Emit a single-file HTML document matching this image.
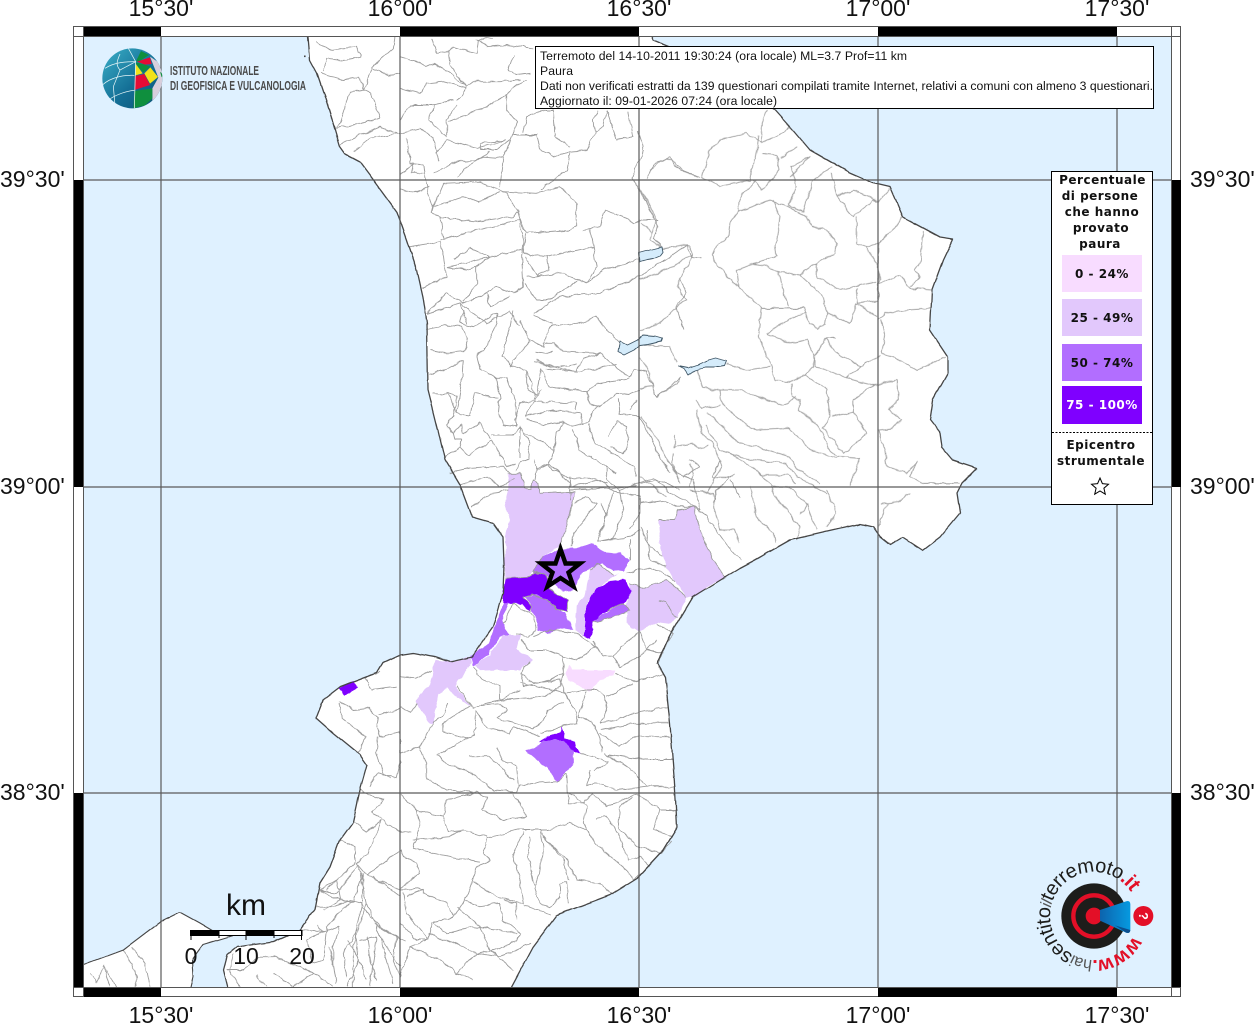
<!DOCTYPE html>
<html lang="it">
<head>
<meta charset="utf-8">
<title>Paura</title>
<style>
html,body{margin:0;padding:0;background:#fff}
body{width:1254px;height:1024px;overflow:hidden;position:relative}
svg{position:absolute;left:0;top:0;display:block}
.b path{fill:none;stroke:#9c9c9c;stroke-width:.9;vector-effect:non-scaling-stroke;stroke-linejoin:round}
.ax{font-family:"Liberation Sans",sans-serif;font-size:23px;fill:#111}
.ig{font-family:"Liberation Sans",sans-serif;font-size:12.5px;fill:#4a4a4a;font-weight:bold}
.inf{font-family:"Liberation Sans",sans-serif;font-size:12.2px;fill:#111}
.lg{font-family:"DejaVu Sans",sans-serif;font-size:12px;font-weight:bold;fill:#111;text-anchor:middle;letter-spacing:.5px}
.sc{font-family:"Liberation Sans",sans-serif;fill:#111;text-anchor:middle}
</style>
</head>
<body>
<svg width="1254" height="1024" viewBox="0 0 1254 1024" xmlns="http://www.w3.org/2000/svg">
<defs>
<linearGradient id="gl" x1="0" y1="0" x2="1" y2="1"><stop offset="0" stop-color="#3bb0c8"/><stop offset=".55" stop-color="#146f96"/><stop offset="1" stop-color="#0b4f72"/></linearGradient>
<linearGradient id="mg" x1="0" y1="0" x2="1" y2="0"><stop offset="0" stop-color="#0d63ad"/><stop offset="1" stop-color="#069ae0"/></linearGradient>
<clipPath id="mapc"><rect x="83" y="36" width="1088" height="951"/></clipPath>
<clipPath id="gc"><circle cx="112" cy="115" r="90"/></clipPath>
<filter id="wob" filterUnits="userSpaceOnUse" x="60" y="20" width="1130" height="990" color-interpolation-filters="sRGB">
<feTurbulence type="fractalNoise" baseFrequency=".11" numOctaves="2" seed="7" result="n"/>
<feDisplacementMap in="SourceGraphic" in2="n" scale="4.5" xChannelSelector="R" yChannelSelector="G" result="d"/>
<feGaussianBlur in="d" stdDeviation=".35"/>
</filter>
<filter id="wobs" filterUnits="userSpaceOnUse" x="60" y="20" width="1130" height="990" color-interpolation-filters="sRGB">
<feTurbulence type="fractalNoise" baseFrequency=".05" numOctaves="2" seed="3" result="n"/>
<feDisplacementMap in="SourceGraphic" in2="n" scale="3" xChannelSelector="R" yChannelSelector="G" result="d"/>
<feGaussianBlur in="d" stdDeviation=".3"/>
</filter>
</defs>

<rect x="83" y="36" width="1088" height="951" fill="#dff1ff"/>

<g clip-path="url(#mapc)">
<!-- land -->
<g filter="url(#wobs)">
<path fill="#fff" d="M306 30L308 37L310 60L317 73L325 97L333 123L340 147L345 154L360 162L375 182L397 212L407 240L417 270L423 297L427 323L428 390L438 430L445 460L460 485L472 517L493 523L503 537L504 565L503 593L493 627L472 657L450 662L435 657L413 653L400 655L383 663L377 673L340 687L323 700L316 718L333 733L360 755L367 765L360 790L353 822L340 840L330 867L320 883L315 910L300 930L273 942L237 947L227 955L223 970L228 990L510 990L533 947L557 915L610 895L637 878L663 850L677 827L675 790L670 723L665 677L657 663L668 640L673 630L693 597L740 568L755 560L790 540L860 524L873 527L880 537L890 545L903 537L923 550L940 537L960 513L957 493L962 483L977 468L953 460L942 447L940 433L930 420L933 400L948 373L948 357L930 330L932 290L943 260L953 239L940 237L903 217L890 187L873 183L850 173L810 150L793 130L775 110L735 70L690 55L653 40L650 30Z"/>
<path fill="#fff" d="M80 966L123 950L160 922L180 912L200 923L217 933L233 936L203 945L192 960L193 977L190 990L80 990Z"/>
</g>

<g filter="url(#wob)">
<!-- coloured zones -->
<g transform="translate(400 460) scale(.33333)">
<path fill="#e2c8fc" d="M325 40L360 40L375 85L395 85L400 60L415 70L420 100L525 95L510 160L480 260L430 290L400 330L385 350L316 355L315 230L330 180L315 130L325 85Z"/>
<path fill="#e2c8fc" d="M775 180L825 180L835 150L880 140L900 210L940 300L975 350L880 410L860 410L825 365L800 320L785 290Z"/>
<path fill="#e2c8fc" d="M690 370L730 385L800 360L860 410L835 470L810 490L775 485L715 515L680 490L680 435Z"/>
<path fill="#e2c8fc" d="M595 310L640 345L660 340L610 370L565 420L555 480L550 530L525 510L530 440L560 390L570 330Z"/>
<path fill="#b26eff" d="M430 290L480 268L540 262L580 250L610 275L660 280L688 300L670 335L640 330L605 310L570 325L545 340L525 390L490 395L465 370L440 345L405 345L395 335Z"/>
<path fill="#7f00ff" d="M315 355L385 350L410 335L440 345L445 385L505 420L505 455L470 450L440 420L395 405L370 410L395 440L390 460L365 430L310 430L305 425Z"/>
<path fill="#b26eff" d="M375 410L410 405L445 420L470 450L495 460L520 510L490 505L440 520L415 510L410 475L395 460L390 430Z"/>
<path fill="#7f00ff" d="M625 365L675 360L695 395L675 430L625 450L590 475L575 490L580 510L570 535L550 525L555 480L555 440L585 390Z"/>
<path fill="#b26eff" d="M675 430L688 450L650 465L600 485L575 485L590 475L630 450Z"/>
<path fill="#b26eff" d="M325 430L305 480L330 525L300 530L265 585L220 618L212 590L265 550L280 510L300 460L310 430Z"/>
<path fill="#e2c8fc" d="M310 525L330 525L360 525L350 565L400 600L360 630L300 630L240 632L225 615L270 585Z"/>
<path fill="#e2c8fc" d="M105 598L150 605L210 590L215 610L165 680L210 735L190 725L140 685L115 700L100 790L90 790L45 725L90 670Z"/>
<path fill="#f8dcff" d="M495 640L505 615L515 630L570 630L610 630L645 630L640 645L600 660L570 695L530 670L505 660Z"/>
<path fill="#7f00ff" d="M418 845L440 828L480 815L483 798L495 835L520 845L540 880L515 870L490 840Z"/>
<path fill="#b26eff" d="M378 875L420 855L430 840L490 840L520 870L520 915L490 945L470 965L445 930Z"/>
</g>
<path fill="#7f00ff" d="M338 687L353 681L358 688L345 695Z"/>

<!-- borders: north -->
<g class="b" transform="translate(300 30) scale(.33333)">
<path d="M50 35L90 60L170 50L185 80L130 90L80 85L70 125"/>
<path d="M60 130L130 150L180 140L190 180L150 185L120 280L110 295"/>
<path d="M285 20L280 55L240 90L215 115L190 180"/>
<path d="M215 115L270 135L300 130"/>
<path d="M110 295L220 270L240 265L215 190L185 180"/>
<path d="M120 345L170 320L240 290L290 310"/>
<path d="M160 365L210 325L300 310"/>
<path d="M300 80L350 95L375 110L405 100L450 130L500 170L520 155L600 155L660 150"/>
<path d="M395 25L410 70L445 65L460 50L530 70L535 30L580 25"/>
<path d="M530 25L560 50L620 45L700 55"/>
<path d="M445 65L450 105L480 145L500 170"/>
<path d="M640 75L625 120L650 135L690 130"/>
<path d="M300 175L360 190L380 160L430 155L500 175L470 210"/>
<path d="M300 270L330 225L395 225L460 210"/>
<path d="M405 225L385 270L440 320L440 270L470 225"/>
<path d="M445 275L560 230L620 195L650 165L680 150"/>
<path d="M620 195L620 240L650 275L640 310L610 385L600 470"/>
<path d="M300 310L360 295L400 320L410 370L420 395"/>
<path d="M320 320L330 400L370 405"/>
<path d="M405 370L440 330L535 355L570 345L615 330L540 340L545 360L590 360L630 330"/>
<path d="M370 405L380 470L400 530L395 550L420 560L520 575L640 560L655 545L620 490L600 480L540 455L430 460L400 530"/>
<path d="M300 435L340 400L335 430L370 430"/>
<path d="M400 530L490 500L540 515L600 485"/>
<path d="M470 445L500 410L550 380L610 385"/>
<path d="M400 430L470 395L530 390L570 365"/>
<path d="M610 485L710 490L780 470L830 520L830 590L810 600L680 610L665 580L655 545"/>
<path d="M640 315L710 315L720 355L760 380L810 365L800 420L720 480"/>
<path d="M810 365L860 360L885 310L880 270L895 240"/>
<path d="M670 310L680 260L740 240L760 240L765 320L810 350"/>
<path d="M885 310L910 290L920 240L950 330L1000 320L985 245"/>
<path d="M1015 300L1030 360L995 440L1020 480L1050 540L1075 590L1060 625L1085 650"/>
<path d="M1040 445L1060 405L1105 380L1140 420L1200 440"/>
<path d="M915 540L980 565L1000 580L1030 570L1075 570"/>
<path d="M915 540L900 590L850 600"/>
<path d="M300 475L340 490L385 470"/>
<path d="M330 650L420 635L430 680L440 740L365 775"/>
<path d="M420 630L520 605L660 570"/>
<path d="M420 560L430 625"/>
<path d="M660 570L670 640L665 680L670 770L640 790L590 770L540 800L490 820L440 790L380 850"/>
<path d="M445 710L570 680L665 660"/>
<path d="M445 710L500 720L530 710L570 680L510 655L460 690"/>
<path d="M530 710L530 760L490 815"/>
<path d="M675 610L670 670L740 680L880 650L870 600"/>
<path d="M880 650L890 710L860 760L790 730L680 740"/>
<path d="M740 680L745 720L710 735L675 680"/>
<path d="M860 760L910 720L1015 690"/>
<path d="M675 760L710 810L750 810L830 750"/>
<path d="M700 850L780 800L900 790L1020 740L1160 645L1175 680L1200 685"/>
<path d="M1140 750L1160 790L1130 830L1150 900"/>
<path d="M480 820L500 880"/>
<path d="M560 790L570 830L630 800"/>
<path d="M380 850L480 820L560 880L630 840L660 890"/>
</g>

<!-- borders: north-east -->
<g class="b" transform="translate(640 100) scale(.33333)">
<path d="M380 30L365 70L365 130L410 110L450 80"/>
<path d="M365 130L320 100L240 120L210 150L185 230L240 260L330 240L350 150L355 105"/>
<path d="M365 160L410 165L420 210L395 240L365 270L340 240"/>
<path d="M420 175L470 140"/>
<path d="M450 230L510 170L455 200L470 260L445 315L490 335L520 240L575 200"/>
<path d="M30 210L75 175L105 185L130 215L180 230"/>
<path d="M350 240L300 290L295 335L390 300L445 320L500 350L520 380L560 390L590 430L585 460L530 490L530 530L600 570L710 545"/>
<path d="M575 220L590 290L640 350L700 300L715 305L640 270L590 290"/>
<path d="M650 350L650 430L680 440L715 430L770 380L785 350"/>
<path d="M295 335L270 370L265 410L235 430L220 465L225 490L265 530L295 565L350 610L365 625L490 625L510 670L530 685L555 675L560 640L610 660L630 670L650 610L710 650"/>
<path d="M400 300L420 350L405 440L410 470L340 490L370 495L420 515L480 525L530 490"/>
<path d="M290 510L295 565M290 510L340 490"/>
<path d="M415 515L445 620M480 525L550 590L560 640"/>
<path d="M650 565L655 610L715 600L715 430"/>
<path d="M680 440L715 500"/>
<path d="M715 500L720 550L780 525L800 550L810 565L875 570"/>
<path d="M850 395L840 490L825 510L840 530L810 560"/>
<path d="M715 660L735 640L800 630L875 625"/>
<path d="M725 660L735 700L725 760L780 780L830 810L920 770"/>
<path d="M365 625L360 680L355 710L385 775L405 840L450 845L495 825L520 800L525 770L555 715L590 715"/>
<path d="M380 700L450 730L500 720L525 770"/>
<path d="M380 700L430 670L460 650L500 640"/>
<path d="M555 715L580 750L660 800L720 765"/>
<path d="M525 770L525 800L550 805L620 835L660 800"/>
<path d="M495 825L560 870L570 950L550 985L610 1060L680 1000L640 935L575 950"/>
<path d="M620 835L700 855L640 900L640 935"/>
<path d="M700 855L770 840L775 900L745 930L785 960L760 985L715 990L735 1050L740 1100L800 1120L830 1085L810 1130L850 1150L955 1150"/>
<path d="M455 850L455 890L480 900L475 930L530 970L570 1050L590 1070L660 1075L630 1160"/>
<path d="M240 870L300 870L380 900L430 915L470 890"/>
<path d="M240 870L245 910L310 970L350 990L450 985L510 1050L590 1075"/>
<path d="M165 900L185 925L240 915"/>
<path d="M170 930L185 1000L215 1030L240 1080L245 1100L200 1180"/>
<path d="M205 940L260 990L300 1030L350 1040L450 1070L470 1105L540 1150"/>
<path d="M195 975L240 1050L300 1070L350 1080L440 1090L470 1130L560 1180"/>
<path d="M270 1060L350 1110L395 1160L450 1160L500 1215L480 1245"/>
<path d="M350 1110L360 1125L445 1125L470 1150"/>
<path d="M105 1005L105 1045L125 1035L155 1030L175 1045L205 1035"/>
<path d="M100 1060L95 1090L120 1150"/>
<path d="M150 1090L160 1110L150 1160"/>
<path d="M0 950L40 1000L80 1075L115 1135"/>
<path d="M0 1130L40 1160L80 1190"/>
<path d="M0 540L100 500L135 475L160 465L150 440L130 435L70 445"/>
<path d="M160 465L110 555L140 600L100 630L60 670L0 695"/>
<path d="M0 735L90 740L110 790"/>
<path d="M260 790L320 810L390 800"/>
<path d="M170 810L190 865L240 870"/>
<path d="M120 830L110 850L50 890L35 860L0 865"/>
<path d="M0 770L30 820L40 860"/>
<path d="M0 265L30 320L50 360L35 400L30 420L70 445"/>
<path d="M0 370L20 380L35 400"/>
<path d="M750 265L715 305"/>
<path d="M225 1230L240 1290L285 1290L300 1330"/>
<path d="M330 1160L350 1250L400 1300L405 1330"/>
<path d="M390 1160L430 1220L480 1280L470 1320"/>
<path d="M500 1210L530 1290"/>
<path d="M560 1170L590 1240L560 1280"/>
<path d="M150 1170L220 1180L225 1230"/>
<path d="M720 1210L775 1205L810 1180M715 1280L740 1210"/>
</g>

<!-- borders: centre -->
<g class="b" transform="translate(420 310) scale(.33333)">
<path d="M20 60L80 45L125 50L145 85L130 125L80 130L30 120"/>
<path d="M30 190L75 180L130 150L125 210L110 310L85 255L35 250"/>
<path d="M130 0L120 40L160 50L230 10L230 40L195 120L170 135L180 175L230 205L240 265L235 310L250 345L290 350L285 270L260 205L230 205"/>
<path d="M280 0L270 50L245 140L275 165L320 180L345 260L340 270L300 280L285 330"/>
<path d="M300 30L330 95L280 150L275 170"/>
<path d="M330 90L370 110L385 60L395 45L470 40L530 20L550 50L600 95"/>
<path d="M340 15L395 40"/>
<path d="M370 100L400 100L430 125L540 130L580 165L630 200L640 175L680 185L695 220L700 240L710 260L750 230L780 200"/>
<path d="M345 125L380 130L400 125M345 155L470 185L490 145L540 130"/>
<path d="M350 150L390 170L470 165M380 175L480 185L590 165"/>
<path d="M320 180L320 235L350 255L365 175L385 230L415 235L500 245L530 220L630 205"/>
<path d="M365 240L350 260L315 320L350 310L400 300L480 310L490 340L505 335L530 290L540 290L590 250L625 255L660 240"/>
<path d="M345 275L400 275L470 280L465 300"/>
<path d="M500 245L510 280L540 290"/>
<path d="M320 325L340 335L370 345L430 335L450 350L490 340"/>
<path d="M300 350L310 365L330 400L325 445L300 460L285 480"/>
<path d="M315 370L385 405L400 425L410 370L435 335"/>
<path d="M400 425L385 460L350 475L345 510"/>
<path d="M385 460L400 480L450 505L500 500L560 520"/>
<path d="M460 355L480 420L550 465L590 490"/>
<path d="M505 340L525 400L570 425L640 470L650 500"/>
<path d="M565 380L590 335L620 350L625 400L610 430L570 410"/>
<path d="M595 265L600 310L655 320L680 360L720 440L750 490"/>
<path d="M630 300L650 270"/>
<path d="M215 375L280 375L300 350L300 400L300 445"/>
<path d="M215 390L170 420L145 435L120 410L125 390"/>
<path d="M125 390L105 390L100 370L125 345L130 370L180 340L210 385"/>
<path d="M80 250L110 260L100 320L80 345L100 370"/>
<path d="M110 310L150 315L165 250L235 265"/>
<path d="M75 440L120 410"/>
<path d="M215 390L260 470L285 460"/>
<path d="M85 490L150 475L250 470L270 490"/>
<path d="M450 500L450 570"/>
<path d="M560 470L560 510L600 540L650 520"/>
<path d="M650 520L700 505L740 520L780 540"/>
</g>

<!-- borders: around coloured area -->
<g class="b" transform="translate(400 460) scale(.33333)">
<path d="M180 75L260 50L300 80L345 55"/>
<path d="M215 140L270 100L325 90"/>
<path d="M400 0L410 30L450 10L510 70L515 80L600 60L640 95L620 160L600 230"/>
<path d="M510 90L640 85L710 75"/>
<path d="M525 130L555 110L590 130L520 220L515 260"/>
<path d="M600 130L620 165L590 245"/>
<path d="M640 95L720 110L720 160L690 205"/>
<path d="M660 90L670 150L640 235L590 245L690 230L720 210"/>
<path d="M720 130L780 120L830 140L880 140"/>
<path d="M720 200L750 260L785 290"/>
<path d="M690 240L690 300"/>
<path d="M740 210L750 300L800 320"/>
<path d="M680 340L750 320L800 345L825 365"/>
<path d="M880 140L920 170L985 260L1020 300"/>
<path d="M900 150L880 60L830 40L800 0"/>
<path d="M940 130L950 90L1000 40"/>
<path d="M720 70L770 60L800 90L900 150"/>
<path d="M990 60L1020 110"/>
<path d="M850 50L900 20L870 0"/>
<path d="M960 0L940 50L990 50"/>
<path d="M325 40L360 40L375 85L395 85L400 60L415 70L420 100L525 95L510 160L480 260"/>
<path d="M315 355L385 350L410 335L440 345L445 385L505 420L505 455L470 450L440 420L395 405L370 410L395 440L390 460"/>
<path d="M625 450L675 430L688 450L650 465L600 485L575 485"/>
<path d="M430 290L395 335L440 345"/>
<path d="M570 330L595 310L640 345"/>
<path d="M690 370L730 385L800 360L860 410"/>
<path d="M775 180L825 180L835 150L880 140L900 210L940 300L975 350"/>
<path d="M775 420L800 425L815 460L835 470"/>
<path d="M360 540L390 570L440 570L490 590L530 600L590 560L530 520L450 510L400 530"/>
<path d="M310 490L340 430L400 470L410 510L385 535L350 520"/>
<path d="M490 590L490 640L480 680"/>
<path d="M580 540L610 590L640 590L660 620L720 590L770 540"/>
<path d="M640 590L660 560L715 520"/>
<path d="M720 515L740 570L790 580M770 490L820 520L790 570L770 610"/>
<path d="M390 605L360 640L370 680L450 660L490 640"/>
<path d="M220 620L250 660L300 680L300 720L360 690"/>
<path d="M300 720L430 710L480 680"/>
<path d="M170 680L220 745L250 730L300 720"/>
</g>

<!-- borders: south -->
<g class="b" transform="translate(300 640) scale(.33333)">
<path d="M240 95L195 115L215 150L290 140"/>
<path d="M120 185L160 210L210 205L235 235L230 260L240 290L300 275"/>
<path d="M120 190L125 235L195 290L175 340"/>
<path d="M300 205L235 225"/>
<path d="M300 110L345 115L395 90"/>
<path d="M300 200L330 220L350 190"/>
<path d="M300 275L300 370L290 415L235 400L205 440"/>
<path d="M235 290L230 340L250 400L270 415"/>
<path d="M300 340L360 320L400 245L430 225L445 190"/>
<path d="M360 320L380 370L380 415L440 450L520 455"/>
<path d="M410 345L445 375L510 395L580 450L650 455L660 435L700 430L770 425L800 400"/>
<path d="M530 215L525 285L500 295L460 320L410 345"/>
<path d="M500 295L430 275L430 250L460 230L510 195"/>
<path d="M510 350L570 350L640 420"/>
<path d="M590 325L610 360L650 380L655 440"/>
<path d="M530 215L565 265L630 280L640 260L720 290"/>
<path d="M540 195L600 190L620 210L590 235L700 265L730 245L740 210L790 190"/>
<path d="M660 100L700 130L780 120L790 150L830 220L830 250L780 260L720 280"/>
<path d="M660 130L800 160L860 150L890 150"/>
<path d="M860 155L835 230L880 245L900 295L905 340"/>
<path d="M890 150L915 170L920 210L900 250L950 240L1000 220L1105 200"/>
<path d="M920 170L1000 130"/>
<path d="M945 100L1010 125L1090 105"/>
<path d="M905 270L1000 250L1108 250"/>
<path d="M915 340L1000 395L1040 440L1125 440"/>
<path d="M925 345L1040 360L1120 360"/>
<path d="M900 280L960 320L1000 290L1115 290"/>
<path d="M800 400L805 490L850 490L880 460L920 500L950 490L1010 460L1080 510L1133 510"/>
<path d="M870 390L860 440L885 430L950 450L1040 440"/>
<path d="M840 340L925 365L880 395"/>
<path d="M805 455L860 500L850 550L860 570L810 550L740 570L650 570L560 595L550 640L570 665L530 680L520 715L500 770L460 830L395 850L385 900L350 900L300 850"/>
<path d="M180 450L250 480L215 520L245 535L300 580L335 575"/>
<path d="M300 465L350 510L360 560L340 625L400 640L540 665"/>
<path d="M345 510L430 530L445 575L490 570L560 590"/>
<path d="M430 530L440 480L530 455L560 470L545 510L610 540L680 530L660 490L640 460"/>
<path d="M340 600L450 590L480 570"/>
<path d="M160 545L200 575L245 540L220 600L205 640L170 670L200 705L300 630L310 650L350 670L360 700L300 745"/>
<path d="M120 600L165 620L165 670L110 720L80 750"/>
<path d="M170 670L190 720L185 800L220 840L250 870L290 890L320 900"/>
<path d="M200 705L300 750L370 745L370 760L440 790L460 825"/>
<path d="M310 760L320 820L385 900L330 920L300 1010"/>
<path d="M320 770L370 745"/>
<path d="M470 800L540 860L570 930L640 990"/>
<path d="M495 780L540 800L600 790L610 840L660 880L650 905L580 930L530 940L470 1000"/>
<path d="M520 725L590 770L670 790L660 720L640 640L670 575"/>
<path d="M610 780L650 790L650 840"/>
<path d="M670 795L750 825"/>
<path d="M690 590L685 650L700 730L720 790L750 800L780 770L780 730L800 725L805 790"/>
<path d="M720 570L730 620L720 700L705 735"/>
<path d="M725 580L790 660L805 720"/>
<path d="M730 590L800 660L830 720L900 730L940 765"/>
<path d="M860 570L885 610L980 690L1000 720L1015 705"/>
<path d="M885 535L920 530L960 590L985 660L1020 650L1050 680"/>
<path d="M1000 470L960 500L955 560L1010 620L1085 640L1115 600"/>
<path d="M1080 510L1060 570L1120 590"/>
<path d="M50 800L100 800L150 780L185 790L190 800"/>
<path d="M60 750L110 760L170 680"/>
<path d="M120 860L100 920L100 980"/>
<path d="M170 870L130 940L140 1010"/>
<path d="M185 800L165 880L175 950L200 1020"/>
<path d="M200 890L210 960L230 1020"/>
<path d="M220 850L290 890L280 960L300 1010"/>
<path d="M385 880L460 910L530 940L600 950L690 910"/>
<path d="M330 920L420 960L470 1000L520 1020"/>
<path d="M400 850L440 880L520 860L600 870L650 880"/>
<path d="M0 870L70 875L120 860"/>
</g>

<!-- borders: bottom-left -->
<g class="b" transform="translate(60 860) scale(.33333)">
<path d="M90 340L110 370L130 320L150 380"/>
<path d="M130 320L170 380"/>
<path d="M190 270L225 330L230 380"/>
<path d="M215 260L255 310L270 380"/>
<path d="M520 280L510 330L540 380"/>
<path d="M500 330L550 330L600 290L640 290L690 310L760 340"/>
<path d="M590 345L620 380"/>
<path d="M640 340L700 380L760 340L820 380"/>
<path d="M780 90L840 120L830 60L780 90"/>
<path d="M790 150L840 120L880 125L910 40"/>
<path d="M770 195L790 215L740 240L760 310L790 300L800 200L870 125"/>
<path d="M900 40L920 130L880 250L880 380"/>
<path d="M940 50L1020 110"/>
<path d="M920 130L960 230L1020 320"/>
<path d="M810 260L830 370"/>
<path d="M860 240L900 300L860 380"/>
<path d="M900 240L950 230L930 380"/>
<path d="M960 230L1000 370"/>
</g>
</g>

<g filter="url(#wobs)">
<!-- coastline -->
<path fill="none" stroke="#454545" stroke-width="1.3" stroke-linejoin="round" d="M306 30L308 37L310 60L317 73L325 97L333 123L340 147L345 154L360 162L375 182L397 212L407 240L417 270L423 297L427 323L428 390L438 430L445 460L460 485L472 517L493 523L503 537L504 565L503 593L493 627L472 657L450 662L435 657L413 653L400 655L383 663L377 673L340 687L323 700L316 718L333 733L360 755L367 765L360 790L353 822L340 840L330 867L320 883L315 910L300 930L273 942L237 947L227 955L223 970L228 990M510 990L533 947L557 915L610 895L637 878L663 850L677 827L675 790L670 723L665 677L657 663L668 640L673 630L693 597L740 568L755 560L790 540L860 524L873 527L880 537L890 545L903 537L923 550L940 537L960 513L957 493L962 483L977 468L953 460L942 447L940 433L930 420L933 400L948 373L948 357L930 330L932 290L943 260L953 239L940 237L903 217L890 187L873 183L850 173L810 150L793 130L775 110L735 70L690 55L653 40L650 30"/>
<path fill="none" stroke="#454545" stroke-width="1.1" stroke-linejoin="round" d="M80 966L123 950L160 922L180 912L200 923L217 933L233 936L203 945L192 960L193 977L190 990"/>
<rect x="304" y="55" width="1.6" height="1.6" fill="#444"/>

<!-- lakes -->
<g fill="#d5ecfb" stroke="#3f5666" stroke-width=".9" stroke-linejoin="round">
<path d="M639 253L650 250L662 247L663 252L660 256L653 259L647 260L640 262Z"/>
<path d="M620 341L628 345L638 340L643 335L655 336L662 338L661 341L648 344L640 345L634 350L624 355L618 352Z"/>
<path d="M678 366L688 368L697 365L708 360L715 358L727 361L725 366L718 367L705 367L695 370L688 375L684 369Z"/>
</g>
</g>

<!-- grid -->
<g stroke="#5a5a5a" stroke-width="1.2" fill="none">
<path d="M161 36V987M400 36V987M639 36V987M878 36V987M1117 36V987"/>
<path d="M83 180H1171M83 487H1171M83 793H1171"/>
</g>
</g>

<!-- frame -->
<rect x="73.5" y="26.5" width="1107" height="970" fill="none" stroke="#555" stroke-width="1"/>
<rect x="74" y="27" width="9" height="9" fill="#fff"/>
<g fill="#000">
<rect x="83" y="27" width="78" height="9"/><rect x="400" y="27" width="239" height="9"/><rect x="878" y="27" width="239" height="9"/>
<rect x="83" y="987" width="78" height="10"/><rect x="400" y="987" width="239" height="10"/><rect x="878" y="987" width="239" height="10"/>
<rect x="74" y="180" width="9" height="307"/><rect x="74" y="793" width="9" height="194"/>
<rect x="1171" y="180" width="10" height="307"/><rect x="1171" y="793" width="10" height="194"/>
</g>
<path d="M73 36.5H1181M73 987.5H1181M83.5 26V997M1171.5 26V997" stroke="#555" stroke-width="1" fill="none"/>

<!-- axis labels -->
<g class="ax" text-anchor="middle">
<text x="161" y="16">15°30'</text><text x="400" y="16">16°00'</text><text x="639" y="16">16°30'</text><text x="878" y="16">17°00'</text><text x="1117" y="16">17°30'</text>
<text x="161" y="1023">15°30'</text><text x="400" y="1023">16°00'</text><text x="639" y="1023">16°30'</text><text x="878" y="1023">17°00'</text><text x="1117" y="1023">17°30'</text>
</g>
<g class="ax">
<text x="0" y="187">39°30'</text><text x="0" y="494">39°00'</text><text x="0" y="800">38°30'</text>
<text x="1190" y="187">39°30'</text><text x="1190" y="494">39°00'</text><text x="1190" y="800">38°30'</text>
</g>

<!-- INGV logo -->
<g transform="translate(95 40) scale(.33333)">
<circle cx="112" cy="115" r="90" fill="url(#gl)"/>
<g clip-path="url(#gc)">
<path fill="#d8cfdc" d="M165 50L210 80L210 150L172 182L172 145L190 113Z"/>
<path fill="#0f8f3e" d="M124 62L138 33L162 45L130 66Z"/>
<path fill="#e50b35" d="M126 65L165 52L170 72L150 74Z"/>
<path fill="#0f8f3e" d="M122 67L150 74L166 80L145 97L130 82Z"/>
<path fill="#f2e21a" d="M121 70L143 100L121 106Z"/>
<path fill="#f2e21a" d="M166 82L189 111L165 131L148 100Z"/>
<path fill="#e50b35" d="M120 108L148 102L165 135L118 150Z"/>
<path fill="#0f8f3e" d="M118 153L172 145L172 175L150 196L115 205Z"/>
<path fill="#0f8f3e" d="M195 95L205 105L200 112Z"/>
</g>
<g fill="none" stroke="#e4f4f6" stroke-width="2.2" clip-path="url(#gc)">
<path d="M122 65L118 205"/>
<path d="M122 65L75 90L55 140L60 195"/>
<path d="M122 65L100 25"/>
<path d="M30 85C60 65 100 65 122 65"/>
<path d="M22 135C50 110 90 105 118 106"/>
<path d="M40 180C65 162 100 152 118 151"/>
<path d="M75 42C65 65 62 75 75 90"/>
</g>
</g>
<g class="ig">
<text x="170" y="75" textLength="89" lengthAdjust="spacingAndGlyphs">ISTITUTO NAZIONALE</text>
<text x="170" y="90" textLength="136" lengthAdjust="spacingAndGlyphs">DI GEOFISICA E VULCANOLOGIA</text>
</g>

<!-- info box -->
<rect x="535.5" y="46.5" width="618" height="62" fill="#fff" stroke="#000" stroke-width="1"/>
<g class="inf">
<text x="540" y="60" textLength="367">Terremoto del 14-10-2011 19:30:24 (ora locale) ML=3.7 Prof=11 km</text>
<text x="540" y="75" textLength="33">Paura</text>
<text x="540" y="90" textLength="613">Dati non verificati estratti da 139 questionari compilati tramite Internet, relativi a comuni con almeno 3 questionari.</text>
<text x="540" y="105" textLength="237">Aggiornato il: 09-01-2026 07:24 (ora locale)</text>
</g>

<!-- legend -->
<rect x="1051.5" y="171.5" width="101" height="333" fill="#fff" stroke="#000" stroke-width="1"/>
<g class="lg">
<text x="1102.500" y="184">Percentuale</text>
<text x="1100" y="200">di persone</text>
<text x="1102" y="216">che hanno</text>
<text x="1101" y="232">provato</text>
<text x="1100" y="248">paura</text>
</g>
<rect x="1062" y="255" width="80" height="37" fill="#f8dcff"/>
<rect x="1062" y="299" width="80" height="37" fill="#e2c8fc"/>
<rect x="1062" y="344" width="80" height="37" fill="#b26eff"/>
<rect x="1062" y="386" width="80" height="38" fill="#7f00ff"/>
<g class="lg">
<text x="1102" y="278">0 - 24%</text>
<text x="1102" y="322">25 - 49%</text>
<text x="1102" y="367">50 - 74%</text>
<text x="1102" y="409" style="fill:#fff">75 - 100%</text>
<text x="1101" y="449">Epicentro</text>
<text x="1101" y="465">strumentale</text>
</g>
<path d="M1052 432.500H1152" stroke="#000" stroke-width="1" stroke-dasharray="2 1.500"/>
<path d="M1100 478L1102.400 483.600L1108.500 484.200L1103.900 488.200L1105.300 494.200L1100 491L1094.700 494.200L1096.100 488.200L1091.500 484.200L1097.600 483.600Z" fill="#fff" stroke="#000" stroke-width="1"/>

<!-- epicentre star -->
<path d="M560.500 549L565.500 563.500L580 563.500L568.500 572.500L573.500 586.500L560.500 578L547.500 586.500L552.500 572.500L541 563.500L555.500 563.500Z" fill="none" stroke="#000" stroke-width="4.400" stroke-linejoin="miter"/>

<!-- scale bar -->
<rect x="190" y="930" width="29" height="6" fill="#000"/>
<rect x="219" y="930.500" width="27" height="5" fill="#fff" stroke="#000" stroke-width="1"/>
<rect x="246" y="930" width="28" height="6" fill="#000"/>
<rect x="274" y="930.500" width="28" height="5" fill="#fff" stroke="#000" stroke-width="1"/>
<path d="M191 930V940M246 930V940M301.500 930V940M219 936V938M274 936V938" stroke="#000" stroke-width="1"/>
<text class="sc" x="246" y="915" font-size="30">km</text>
<g class="sc" font-size="23">
<text x="191" y="964">0</text><text x="246" y="964">10</text><text x="302" y="964">20</text>
</g>

<!-- haisentito logo -->
<g transform="translate(1020 850) scale(.33333)">
<circle cx="222" cy="198" r="98" fill="#1d1d1b"/>
<circle cx="222" cy="198" r="62" fill="none" stroke="#e30f27" stroke-width="13"/>
<circle cx="222" cy="198" r="25" fill="#e30f27"/>
<path d="M240 180L318 154Q330 150 331 162L331 238Q331 252 318 248L240 212Z" fill="url(#mg)"/>
<path d="M285 226L331 240Q330 252 318 248Z" fill="#0b4f8f"/>
<circle cx="370" cy="198" r="30" fill="#e30f27"/>
<text x="370" y="198" transform="rotate(90 370 198)" text-anchor="middle" dy="13" font-family="Liberation Sans,sans-serif" font-weight="bold" font-size="38" fill="#fff">?</text>
</g>
<path id="ring" d="M1133.200 936A44 44 0 1 1 1132.100 894" fill="none"/>
<text font-family="Liberation Sans,sans-serif" font-size="20" fill="#1d1d1b">
<textPath href="#ring" textLength="230" lengthAdjust="spacing"><tspan fill="#e30f27" font-weight="bold">www.</tspan><tspan fill="#555" font-size="16">hai</tspan>sentito<tspan fill="#555" font-style="italic" font-size="16">il</tspan>terremoto<tspan fill="#e30f27" font-weight="bold">.it</tspan></textPath>
</text>
</svg>
</body>
</html>
